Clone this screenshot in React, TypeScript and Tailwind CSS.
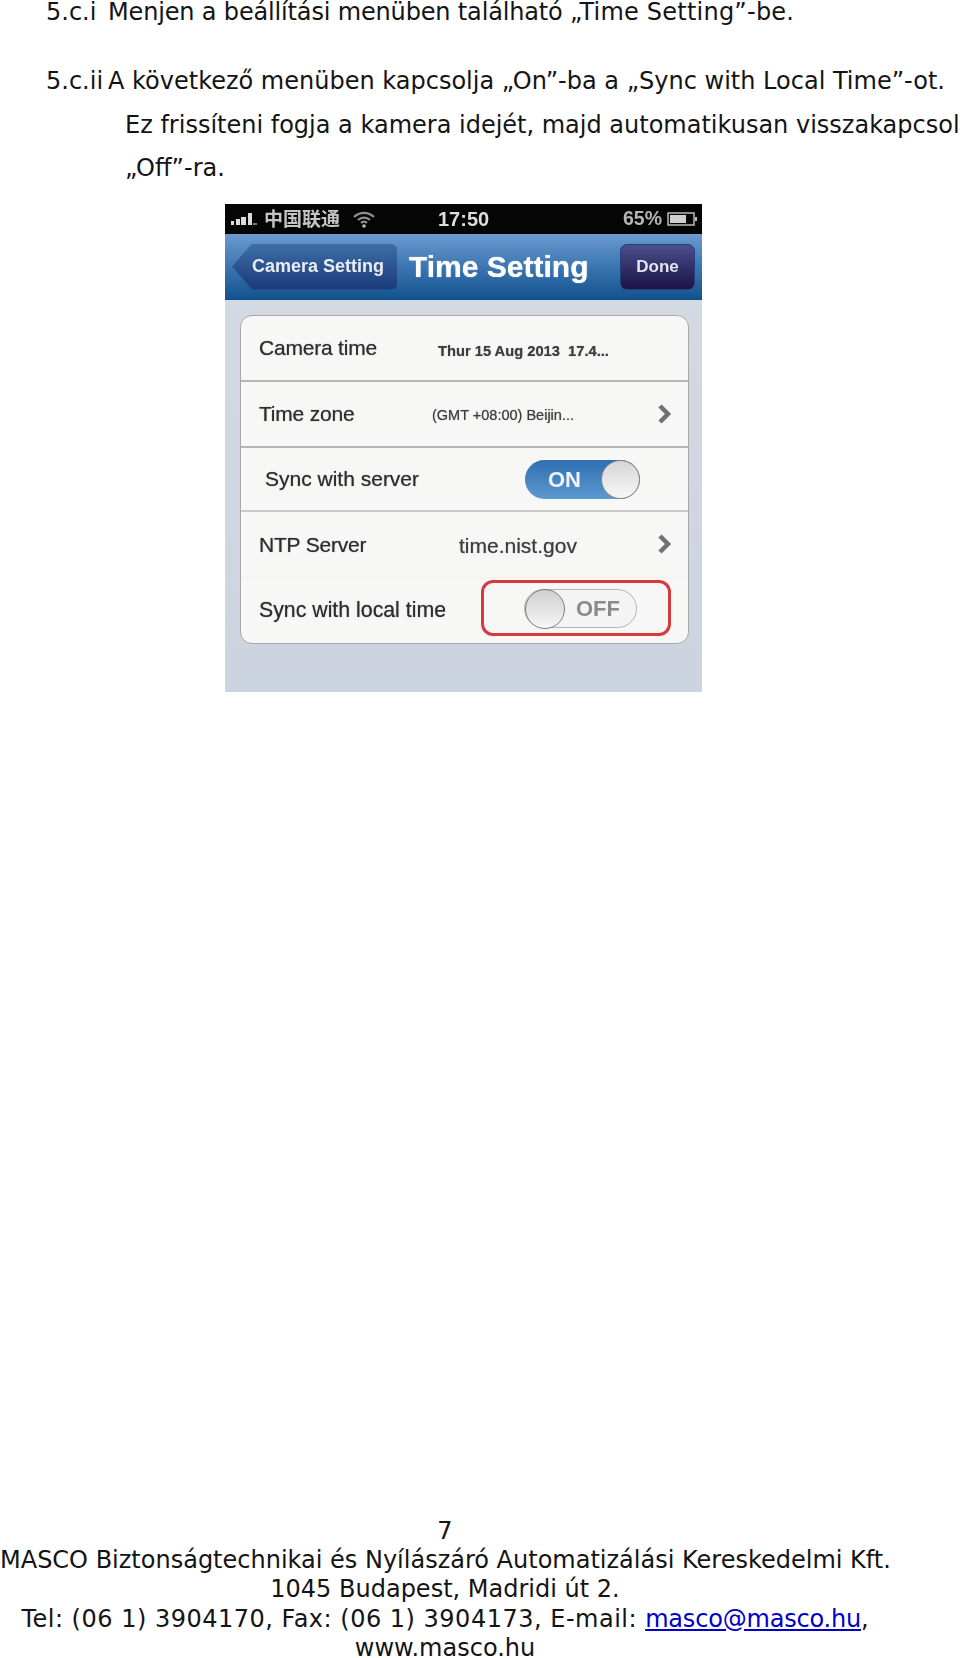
const bodyFont = "font-['DejaVu_Sans',Verdana,sans-serif]";
const phoneFont = "font-['Liberation_Sans','Noto_Sans_CJK_SC',sans-serif]";
const labelClass = "font-medium text-[#2c2d30] [text-shadow:0_0_1px_#666] whitespace-nowrap";

function Chevron() {
  return (
    <svg width="16" height="22" viewBox="0 0 16 22" className="shrink-0">
      <path d="M3 3l8 8-8 8" fill="none" stroke="#6f7174" strokeWidth="4.5" />
    </svg>
  );
}

function Row({ label, value, valueClass, rowClass, chevron }: { label: string; value: string; valueClass: string; rowClass: string; chevron?: boolean }) {
  return (
    <div className={`flex items-center relative ${rowClass}`}>
      <span className={`ml-[18px] text-[21px] tracking-[-0.2px] ${labelClass}`}>{label}</span>
      <span className={`absolute whitespace-pre [text-shadow:0_0_1px_#777] ${valueClass}`}>{value}</span>
      {chevron && (
        <span className="absolute right-[15px] top-[21px]">
          <Chevron />
        </span>
      )}
    </div>
  );
}

function PhoneShot() {
  return (
    <div className={`ml-[225px] mt-[13.5px] w-[477px] h-[488px] shrink-0 flex flex-col blur-[0.6px] bg-[linear-gradient(180deg,#dfe2e6_0,#d3d9e2_22%,#ccd4e0_100%)] ${phoneFont}`}>
      {/* status bar */}
      <div className="h-[30px] bg-[#050505] flex items-center text-[#c9c9c9] font-bold relative shrink-0">
        <svg width="28" height="14" viewBox="0 0 28 14" className="ml-[5px]">
          <path d="M1 9h3v4H1zM6 7h4v6H6zM11 5h5v8h-5zM18 1h4v12h-4z" fill="#dcdcdc" />
          <path d="M23 11h4v2h-4z" fill="#777" />
        </svg>
        <span className="ml-[6px] text-[19px] leading-none text-[#c4c4c4]">中国联通</span>
        <svg width="24" height="18" viewBox="0 0 24 18" className="ml-[12px]">
          <path d="M2 7a14 14 0 0 1 20 0M6 10a9 9 0 0 1 12 0M9 13a4 4 0 0 1 6 0" fill="none" stroke="#8f8f8f" strokeWidth="2.2" />
          <circle cx="12" cy="16" r="1.8" fill="#bbb" />
        </svg>
        <span className="absolute left-[213px] text-[20px] leading-none text-[#dedede]">17:50</span>
        <span className="ml-auto text-[19.5px] leading-none text-[#b5b5b5]">65%</span>
        <svg width="32" height="16" viewBox="0 0 32 16" className="ml-[5px] mr-[3px]">
          <rect x="1" y="2" width="26" height="12" fill="none" stroke="#bbb" strokeWidth="1.5" />
          <rect x="3" y="4" width="16" height="8" fill="#d0d0d0" />
          <rect x="28" y="6" width="2" height="4" fill="#bbb" />
        </svg>
      </div>
      {/* nav bar */}
      <div className="h-[66px] shrink-0 bg-gradient-to-b from-[#6a9bce] via-[#3c76b2] to-[#10538e] flex items-center border-b border-[#174c7e] relative">
        <div className="ml-[7px] w-[165px] h-[46px] flex items-center justify-center pl-[7px] bg-gradient-to-b from-[#3e6ea8] to-[#1b3a78] rounded-[6px] [clip-path:polygon(0_50%,20px_0,100%_0,100%_100%,20px_100%)] text-[18px] font-bold text-[#e8edf3] whitespace-nowrap">
          Camera Setting
        </div>
        <span className="ml-[12px] text-[30px] font-bold text-white whitespace-nowrap [text-shadow:0_0_1px_#fff]">Time Setting</span>
        <div className="absolute right-[7px] w-[75px] h-[46px] flex items-center justify-center rounded-[7px] bg-gradient-to-b from-[#4c4f8c] to-[#1c1248] border border-[#23407a] text-[17px] font-bold text-[#e4e4ee]">
          Done
        </div>
      </div>
      {/* settings list */}
      <div className="mt-[15px] ml-[15px] mr-[13px] h-[329px] bg-[#f7f7f6] rounded-[12px] border border-[#a6a8ab] overflow-hidden flex flex-col">
        <Row label="Camera time" value="Thur 15 Aug 2013  17.4..." rowClass="h-[66px] border-b-2 border-[#b5b6b8]" valueClass="left-[197px] top-[24px] text-[14.7px] font-bold text-[#3c3d40]" />
        <Row label="Time zone" value="(GMT +08:00) Beijin..." rowClass="h-[66px] border-b-2 border-[#b5b6b8]" valueClass="left-[191px] top-[23px] text-[14.5px] text-[#3c3d40]" chevron />
        <div className="h-[64px] flex items-center border-b-2 border-[#c9cacb] relative">
          <span className={`ml-[24px] text-[21px] ${labelClass}`}>Sync with server</span>
          <div className="absolute left-[284px] top-[12px] w-[115px] h-[39px] rounded-full bg-gradient-to-b from-[#2f6fb0] to-[#5d9ad2] flex items-center">
            <span className="ml-[23px] text-[22px] font-bold text-[#eef4fa]">ON</span>
            <span className="absolute right-0 top-0 w-[39px] h-[39px] rounded-full bg-gradient-to-b from-[#d6d6d6] to-[#f7f7f7] border border-[#8a8a8a]" />
          </div>
        </div>
        <Row label="NTP Server" value="time.nist.gov" rowClass="h-[66px] border-b border-[#f0f0ef]" valueClass="left-[218px] top-[18px] text-[21px] text-[#3c3d40]" chevron />
        <div className="flex-1 flex items-center relative">
          <span className={`ml-[18px] text-[21.3px] ${labelClass}`}>Sync with local time</span>
          <div className="absolute left-[240px] top-[2px] w-[190px] h-[56px] rounded-[12px] border-[3px] border-[#d8393a] flex items-center">
            <div className="ml-[40px] w-[113px] h-[39px] rounded-full bg-[#f4f4f4] border border-[#b5b5b5] relative flex items-center">
              <span className="absolute left-0 -top-px w-[40px] h-[40px] rounded-full bg-gradient-to-b from-[#cfcfcf] to-[#f7f7f7] border border-[#7d7d7d]" />
              <span className="ml-[51px] text-[22px] font-bold text-[#8b8b8b]">OFF</span>
            </div>
          </div>
        </div>
      </div>
    </div>
  );
}

export default function App() {
  return (
    <div className={`w-[960px] h-[1658px] bg-white text-[#141414] text-[24px] flex flex-col overflow-hidden ${bodyFont}`}>
      <div className="pl-[46px] h-[24px] leading-[24px] flex whitespace-nowrap">
        <span className="w-[62px]">5.c.i</span>
        <span>
          <span className="tracking-[-0.16px]">Menjen a beállítási menüben található </span>
          <span className="tracking-[0.22px]">„Time Setting”-be.</span>
        </span>
      </div>
      <div className="mt-[36px] pl-[46px] leading-[43.5px] whitespace-nowrap">
        <div className="flex">
          <span className="w-[62px]">5.c.ii</span>
          <span>A következő menüben kapcsolja „On”-ba a „Sync with Local Time”-ot.</span>
        </div>
        <div className="pl-[79px]">Ez frissíteni fogja a kamera idejét, majd automatikusan visszakapcsol</div>
        <div className="pl-[79px]">„Off”-ra.</div>
      </div>
      <PhoneShot />
      <div className="mt-auto -mb-[5px] w-[890px] text-center leading-[29.2px] whitespace-nowrap">
        <div>7</div>
        <div>MASCO Biztonságtechnikai és Nyílászáró Automatizálási Kereskedelmi Kft.</div>
        <div>1045 Budapest, Madridi út 2.</div>
        <div>
          <span className="tracking-[0.5px]">Tel: (06 1) 3904170, Fax: (06 1) 3904173, E-mail: </span>
          <a href="#" className="text-[#0000c8] underline tracking-[-0.2px]">masco@masco.hu</a>,
        </div>
        <div>www.masco.hu</div>
      </div>
    </div>
  );
}
